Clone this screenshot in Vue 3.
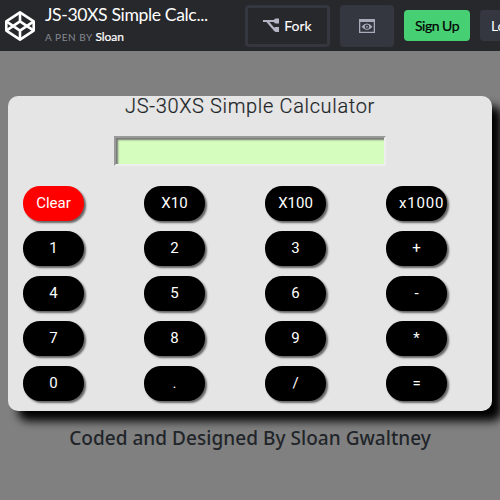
<script setup>
const keys = [
  'Clear', 'X10', 'X100', 'x1000',
  '1', '2', '3', '+',
  '4', '5', '6', '-',
  '7', '8', '9', '*',
  '0', '.', '/', '='
]
</script>

<template>
  <div class="page">
    <header class="bar">
      <svg class="logo" width="32" height="32" viewBox="0 0 32 32" fill="none" stroke="#fff" stroke-width="2.6" stroke-linejoin="round">
        <path d="M16 2.300 29.700 11.400V20.600L16 29.700 2.300 20.600V11.400Z" />
        <path d="M16 2.300V11.400M16 20.600V29.700M2.300 11.400 16 20.600 29.700 11.400M2.300 20.600 16 11.400 29.700 20.600" />
      </svg>
      <div class="meta">
        <div class="name">JS-30XS Simple Calc...</div>
        <div class="by">A PEN BY <span>Sloan</span></div>
      </div>
      <button class="fork">
        <svg width="17" height="15" viewBox="0 0 17 15" fill="none" stroke="#b3b4c4" stroke-width="2.2">
          <path d="M0 3H14M4 3L10 10Q11.500 11.800 14 11.800" />
          <path d="M10.500 2 12.500 0.500H16V5.500H12.500L10.500 4ZM12 9H16V14H12.500L10 12Z" fill="#b3b4c4" stroke="none" />
        </svg>
        <span>Fork</span>
      </button>
      <button class="view">
        <svg width="16" height="14" viewBox="0 0 16 14">
          <path fill="#a9abbb" fill-rule="evenodd" d="M0 0H16V14H0ZM1.300 3V12.700H14.700V3Z" />
          <path fill="#a9abbb" fill-rule="evenodd" d="M2.500 7.800Q8 1.400 13.500 7.800Q8 14.200 2.500 7.800ZM8 5.600A2.200 2.200 0 1 0 8 10A2.200 2.200 0 1 0 8 5.600Z" />
          <circle cx="8" cy="7.800" r="0.900" fill="#a9abbb" />
        </svg>
      </button>
      <button class="signup">Sign Up</button>
      <button class="login">Log In</button>
    </header>
    <main class="calc">
      <h1>JS-30XS Simple Calculator</h1>
      <input class="display" type="text" readonly>
      <div class="keys">
        <button v-for="k in keys" :key="k" class="key" :class="{ clear: k === 'Clear', wide: k === 'x1000' }">{{ k }}</button>
      </div>
    </main>
    <footer>Coded and Designed By Sloan Gwaltney</footer>
  </div>
</template>

<style>
body { background: #808080; overflow: hidden; }
</style>

<style scoped>
* { box-sizing: border-box; }
.page { width: 500px; height: 500px; overflow: hidden; background: #808080; }
button { border: 0; margin: 0; padding: 0; flex: none; font-family: Lato, sans-serif; font-size: 14px; }
.bar { display: flex; align-items: center; height: 51px; padding-left: 4px; background: #27282c; font-family: Lato, sans-serif; color: #fff; }
.logo { flex: none; }
.meta { flex: none; width: 200px; padding-left: 9px; white-space: nowrap; }
.name { font-size: 17.600px; line-height: 22px; letter-spacing: -0.370px; margin-top: -4px; }
.by { font-size: 10px; line-height: 14px; margin-top: 4px; letter-spacing: 0.550px; color: #868894; }
.by span { font-size: 12px; letter-spacing: -0.100px; color: #fff; -webkit-text-stroke: 0.200px #fff; }
.fork { display: flex; align-items: center; justify-content: center; gap: 4px; width: 85px; height: 42px; margin-left: 9px; border: 3px solid #343740; border-radius: 4px; background: transparent; color: #fff; }
.fork span { -webkit-text-stroke: 0.100px #fff; }
.view { display: flex; align-items: center; justify-content: center; width: 54px; height: 42px; margin-left: 10px; border-radius: 4px; background: #343740; }
.signup { width: 66px; height: 31px; margin-left: 10px; border-radius: 4px; background: #47cf73; color: #000; letter-spacing: -0.500px; -webkit-text-stroke: 0.200px #000; }
.login { width: 62px; height: 31px; margin-left: 10px; padding-left: 11px; text-align: left; border-radius: 4px; background: #343740; color: #fff; letter-spacing: -0.300px; }
.calc { width: 484px; height: 315px; margin: 45px 8px 0; border-radius: 10px; background: #e5e5e5; box-shadow: 10px 10px 10px #000; }
h1 { margin: 0; height: 40px; text-align: center; font: 300 20px/20px Roboto, sans-serif; letter-spacing: 0.650px; color: #212529; -webkit-text-stroke: 0.200px #212529; }
.display { display: block; width: 272px; height: 30px; margin: 0 auto; border: 2px solid; border-color: #999 #eee #eee #999; border-radius: 0; outline: 0; background: #d5fdbe; box-shadow: inset 2px 2px 2px #777; }
.keys { display: grid; grid-template-columns: repeat(4, 121px); grid-auto-rows: 35px; row-gap: 10px; padding: 20px 0 0 15px; }
.key { width: 61px; height: 35px; border-radius: 17px; background: #000; color: #fff; font: 400 15px/35px Roboto, sans-serif; box-shadow: 2px 2px 2px #666; white-space: nowrap; }
.clear { background: #f00; }
.wide { padding-left: 13px; text-align: left; letter-spacing: 0.800px; }
footer { margin-top: 15px; text-align: center; font: 500 19px/24px "Noto Sans", sans-serif; letter-spacing: 0.040px; color: #212529; }
</style>
